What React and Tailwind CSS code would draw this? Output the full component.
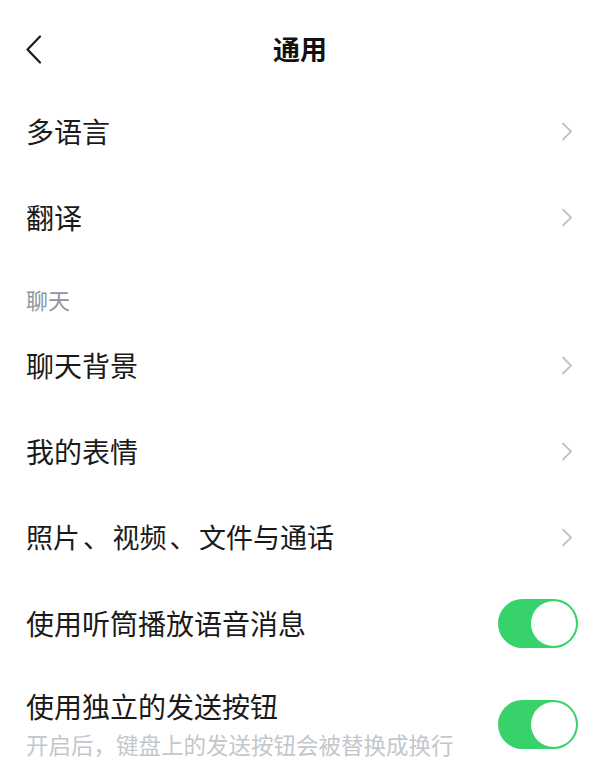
import React, { useState } from "react";

const FONT = "font-['Noto_Sans_CJK_SC','Noto_Sans',sans-serif]";

const Chevron = () => (
  <svg width="12" height="19" viewBox="0 0 12 19" fill="none">
    <path d="M2 1.5 L10 9.5 L2 17.5" stroke="#c2c2c2" strokeWidth="1.8" strokeLinecap="round" strokeLinejoin="round" />
  </svg>
);

const Toggle = ({ on, onClick }) => (
  <button
    onClick={onClick}
    className={`flex h-[49px] w-[80px] shrink-0 items-center rounded-full p-[2px] transition-colors ${
      on ? "justify-end bg-[#38d26a]" : "justify-start bg-[#e5e5e5]"
    }`}
  >
    <span className="block h-[45px] w-[45px] rounded-full bg-white" />
  </button>
);

const LinkRow = ({ label, children }) => (
  <div className="flex h-[86px] items-center justify-between pl-[26px] pr-[27px]">
    {children || <span className="text-[28px] leading-[34px] text-[#1a1a1a]">{label}</span>}
    <Chevron />
  </div>
);

// 、 in the screenshot is narrower than a full cell but keeps some air around it
const Dun = () => <span className="ml-[3px] mr-[16px]">、</span>;

export default function App() {
  // states----------------------------
  const [earpiece, setEarpiece] = useState(true);
  const [sendBtn, setSendBtn] = useState(true);

  return (
    <div className={`h-[783px] w-[600px] overflow-hidden bg-white ${FONT}`}>
      {/* header */}
      <div className="relative flex h-[88px] items-center justify-center pt-[10px]">
        <svg className="absolute left-[25px] top-[35px]" width="18" height="29" viewBox="0 0 18 29" fill="none">
          <path d="M15 1.5 L2.5 14.5 L15 27.5" stroke="#1a1a1a" strokeWidth="2.2" strokeLinecap="round" strokeLinejoin="round" />
        </svg>
        <h1 className="text-[27px] font-bold leading-[34px] text-[#111]">通用</h1>
      </div>

      <LinkRow label="多语言" />
      <LinkRow label="翻译" />

      <div className="h-[62px] pl-[26px] pt-[27px] text-[22px] leading-[24px] text-[#8c959d]">聊天</div>

      <LinkRow label="聊天背景" />
      <LinkRow label="我的表情" />
      <LinkRow>
        <span className="text-[27px] leading-[34px] text-[#1a1a1a] [font-feature-settings:'halt']">
          照片<Dun />视频<Dun />文件与通话
        </span>
      </LinkRow>

      <div className="flex h-[86px] items-center justify-between pl-[26px] pr-[22px]">
        <span className="text-[28px] leading-[34px] text-[#1a1a1a]">使用听筒播放语音消息</span>
        <Toggle on={earpiece} onClick={() => setEarpiece(!earpiece)} />
      </div>

      <div className="flex items-center justify-between pl-[26px] pr-[22px] pt-[23px]">
        <div className="flex flex-col">
          <span className="text-[28px] leading-[34px] text-[#1a1a1a]">使用独立的发送按钮</span>
          <span className="mt-[6px] text-[22.5px] leading-[30px] text-[#c3c7cb]">开启后，键盘上的发送按钮会被替换成换行</span>
        </div>
        <Toggle on={sendBtn} onClick={() => setSendBtn(!sendBtn)} />
      </div>
    </div>
  );
}
